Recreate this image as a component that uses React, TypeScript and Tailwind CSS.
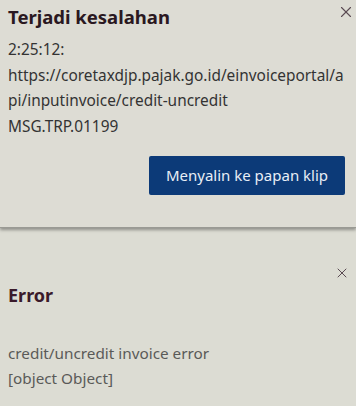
import { X } from "lucide-react";

export default function App() {
  return (
    <div
      className="w-[356px] h-[406px] overflow-hidden bg-[#dcdcd3] text-[#2c2c2c]"
      style={{ fontFamily: '"Noto Sans", "Open Sans", sans-serif' }}
    >
      {/* dialog 1 */}
      <div className="relative h-[228px] px-2 pt-[3px] bg-[#dddcd4] shadow-[0_2px_3px_rgba(0,0,0,0.35)] border-b border-[#9a9a94]">
        <X size={18} strokeWidth={1.5} className="absolute right-[1px] top-[3px] text-[#5a4a52]" />
        <h1 className="text-[18.5px] font-bold leading-[28px] text-[#2a1821]">Terjadi kesalahan</h1>
        <div className="mt-[6px] text-[15.4px] leading-[25.5px] text-[#333] break-all">
          <p>2:25:12:</p>
          <p>https://coretaxdjp.pajak.go.id/einvoiceportal/api/inputinvoice/credit-uncredit</p>
          <p>MSG.TRP.01199</p>
        </div>
        <div className="flex justify-end mt-[17px] pr-[3px]">
          <button className="h-[39px] w-[196px] rounded-[2px] bg-[#0c3a78] text-[15px] text-[#e8eef6]">
            Menyalin ke papan klip
          </button>
        </div>
      </div>

      {/* dialog 2 */}
      <div className="relative px-2 pt-[55px]">
        <X size={16} strokeWidth={1.5} className="absolute right-[6px] top-[37px] text-[#5a4a52]" />
        <h2 className="text-[18px] font-bold leading-[24px] text-[#3a1a2a]">Error</h2>
        <div className="mt-[34px] text-[15.3px] leading-[25px] text-[#5a5a58]">
          <p>credit/uncredit invoice error</p>
          <p>[object Object]</p>
        </div>
      </div>
    </div>
  );
}
